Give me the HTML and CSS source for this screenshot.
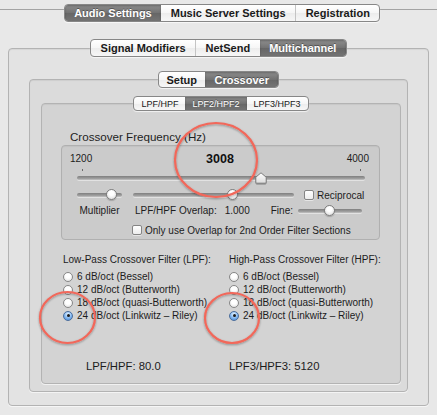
FILE: index.html
```html
<!DOCTYPE html>
<html>
<head>
<meta charset="utf-8">
<link rel="stylesheet" href="styles.css">
</head>
<body>
<div class="window">
  <div class="topbar">
    <div class="seg big">
      <span class="on">Audio Settings</span><span>Music Server Settings</span><span class="div">Registration</span>
    </div>
  </div>

  <div class="tabview tv1">
    <div class="seg big">
      <span>Signal Modifiers</span><span class="div">NetSend</span><span class="on">Multichannel</span>
    </div>
    <div class="pane p1">
      <div class="tabview tv2">
        <div class="seg big s3">
          <span class="s-setup">Setup</span><span class="on">Crossover</span>
        </div>
        <div class="pane p2">
          <div class="tabview tv3">
            <div class="seg small">
              <span>LPF/HPF</span><span class="on">LPF2/HPF2</span><span>LPF3/HPF3</span>
            </div>
            <div class="pane p3">
              <div class="group-label">Crossover Frequency (Hz)</div>
              <div class="groupbox">
                <div class="values">
                  <span>1200</span>
                  <span class="current">3008</span>
                  <span>4000</span>
                </div>
                <div class="ticks"><i></i><i></i></div>
                <div class="slider main">
                  <div class="track"></div>
                  <svg class="thumb-tri" style="left:178px" width="12" height="12" viewBox="0 0 12 12">
                    <defs>
                      <linearGradient id="tg" x1="0" y1="0" x2="0" y2="1">
                        <stop offset="0" stop-color="#ffffff"/>
                        <stop offset="1" stop-color="#dcdcdc"/>
                      </linearGradient>
                    </defs>
                    <path d="M6 0.8 L11.2 5.2 L11.2 10.2 Q11.2 11.2 10.2 11.2 L1.8 11.2 Q0.8 11.2 0.8 10.2 L0.8 5.2 Z" fill="url(#tg)" stroke="#7d7d7d" stroke-width="1"/>
                  </svg>
                </div>
                <div class="row2">
                  <div class="slider mult"><div class="track"></div><span class="knob" style="left:29px"></span></div>
                  <div class="slider overlap"><div class="track"></div><span class="knob" style="left:94px"></span></div>
                  <label class="check"><span class="box"></span>Reciprocal</label>
                </div>
                <div class="row3">
                  <span class="mult-label">Multiplier</span>
                  <span class="ov-label">LPF/HPF Overlap:</span>
                  <span class="ov-value">1.000</span>
                  <span class="fine-label">Fine:</span>
                  <div class="slider fine"><div class="track"></div><span class="knob" style="left:26px"></span></div>
                </div>
                <label class="check row4"><span class="box"></span>Only use Overlap for 2nd Order Filter Sections</label>
              </div>

              <div class="filters">
                <div class="fcol">
                  <div class="flabel">Low-Pass Crossover Filter (LPF):</div>
                  <div class="radio"><span class="dot"></span>6 dB/oct (Bessel)</div>
                  <div class="radio"><span class="dot"></span>12 dB/oct (Butterworth)</div>
                  <div class="radio"><span class="dot"></span>18 dB/oct (quasi-Butterworth)</div>
                  <div class="radio"><span class="dot sel"></span>24 dB/oct (Linkwitz – Riley)</div>
                </div>
                <div class="fcol">
                  <div class="flabel">High-Pass Crossover Filter (HPF):</div>
                  <div class="radio"><span class="dot"></span>6 dB/oct (Bessel)</div>
                  <div class="radio"><span class="dot"></span>12 dB/oct (Butterworth)</div>
                  <div class="radio"><span class="dot"></span>18 dB/oct (quasi-Butterworth)</div>
                  <div class="radio"><span class="dot sel"></span>24 dB/oct (Linkwitz – Riley)</div>
                </div>
              </div>

              <div class="readouts">
                <span class="r1">LPF/HPF: 80.0</span>
                <span>LPF3/HPF3: 5120</span>
              </div>
            </div>
          </div>
        </div>
      </div>
    </div>
  </div>

  <svg class="marks" width="437" height="415" viewBox="0 0 437 415">
    <defs>
      <filter id="sh" x="-20%" y="-20%" width="140%" height="140%">
        <feDropShadow dx="0" dy="1" stdDeviation="0.8" flood-color="#000" flood-opacity="0.35"/>
      </filter>
    </defs>
    <g fill="none" stroke="#f2675a" stroke-width="2.2" filter="url(#sh)">
      <ellipse cx="216" cy="160" rx="41" ry="37"/>
      <ellipse cx="67.5" cy="317.5" rx="27.5" ry="25.5"/>
      <ellipse cx="232" cy="318" rx="27" ry="25"/>
    </g>
  </svg>
</div>
</body>
</html>
```

FILE: styles.css
```css
* { box-sizing: border-box; }

html, body {
  margin: 0;
  padding: 0;
  background: #e8e8e8;
}

body {
  font-family: "Liberation Sans", Arial, sans-serif;
  color: #1c1c1c;
}

.window {
  position: relative;
  width: 437px;
  height: 415px;
  overflow: hidden;
  background: #e8e8e8;
}

/* ---------- segmented tabs ---------- */
.seg {
  position: relative;
  z-index: 1;
  display: inline-flex;
  border: 1px solid #878787;
  border-radius: 4px;
  overflow: hidden;
  box-shadow: 0 1px 1px rgba(255,255,255,0.7);
  background: linear-gradient(#ffffff, #f6f6f6 50%, #ececec 51%, #f7f7f7);
}

.seg span {
  display: flex;
  align-items: center;
  justify-content: center;
  white-space: nowrap;
  color: #1a1a1a;
}

.seg span.div {
  border-left: 1px solid #c4c4c4;
}

.seg span.on {
  color: #ffffff;
  background: linear-gradient(#8e8e8e, #727272 50%, #666666 51%, #747474);
  text-shadow: 0 -1px 0 rgba(0,0,0,0.35);
  box-shadow: inset 0 1px 2px rgba(0,0,0,0.25);
}

.seg.big {
  height: 18px;
  font-size: 11px;
  font-weight: bold;
}

.seg.big span {
  padding: 0 9.5px;
}

.seg.s3 {
  height: 17px;
}

.seg.s3 .s-setup {
  padding: 0 8px;
}

.seg.small {
  height: 15px;
  font-size: 9px;
}

.seg.small span {
  padding: 0 7px;
}

/* ---------- top bar ---------- */
.topbar {
  display: flex;
  justify-content: center;
  padding: 4px 0 0 7px;
  background: linear-gradient(#a3a3a3, #a3a3a3) 0 9px / 100% 1px no-repeat;
}

/* ---------- tab views ---------- */
.tabview {
  display: flex;
  flex-direction: column;
  align-items: center;
}

.pane {
  align-self: stretch;
  border: 1px solid #b3b3b3;
  border-radius: 4px;
  box-shadow: inset 0 1px 1px rgba(0,0,0,0.06), 0 1px 0 rgba(255,255,255,0.6);
}

.tv1 {
  margin: 17px 8px 0 8px;
}

.p1 {
  margin-top: -9px;
  padding: 22px 20px 13px 20px;
  background: #e3e3e3;
}

.p2 {
  margin-top: -9px;
  padding: 16px 6px 7px 11px;
  background: #dbdbdb;
}

.p3 {
  margin-top: -8px;
  padding: 26px 0 10px 0;
  background: #d3d3d3;
}

/* ---------- crossover group ---------- */
.group-label {
  margin-left: 28px;
  font-size: 11.6px;
  line-height: 14px;
  height: 15px;
  color: #1e1e1e;
}

.groupbox {
  margin: 0 20px 0 19px;
  height: 95px;
  border: 1px solid #b0b0b0;
  border-radius: 4px;
  background: #cbcbcb;
  box-shadow: inset 0 1px 1px rgba(0,0,0,0.05);
  padding-top: 7px;
  font-size: 10px;
}

.values {
  display: flex;
  align-items: center;
  height: 12px;
  padding: 0 10px 0 8px;
  line-height: 12px;
}

.values .current {
  flex: 1;
  text-align: center;
  font-weight: bold;
  font-size: 12.5px;
  padding-left: 1px;
  color: #111;
}

.ticks {
  display: flex;
  justify-content: space-between;
  margin: 4px 18px 0 20px;
  height: 2px;
}

.ticks i {
  display: block;
  width: 1px;
  height: 2px;
  background: #6a6a6a;
}

.slider {
  position: relative;
  height: 12px;
}

.track {
  position: absolute;
  left: 0;
  right: 0;
  top: 4px;
  height: 4px;
  border-radius: 2px;
  background: linear-gradient(#7f7f7f, #9c9c9c 60%, #c4c4c4);
  box-shadow: 0 1px 0 rgba(255,255,255,0.45);
}

.slider.main {
  margin: 1px 14px 0 15px;
}

.thumb-tri {
  position: absolute;
  top: 0;
  filter: drop-shadow(0 1px 0.6px rgba(0,0,0,0.25));
}

.knob {
  position: absolute;
  top: 0;
  width: 11px;
  height: 11px;
  border-radius: 50%;
  border: 1px solid #7d7d7d;
  background: radial-gradient(circle at 50% 35%, #ffffff 30%, #e2e2e2 80%);
  box-shadow: 0 1px 1px rgba(0,0,0,0.2);
}

.row2 {
  display: flex;
  align-items: center;
  margin-top: 5px;
  height: 12px;
  padding-left: 15px;
}

.slider.mult {
  width: 45px;
}

.slider.overlap {
  width: 161px;
  margin-left: 11px;
}

.check {
  display: flex;
  align-items: center;
  gap: 3px;
  white-space: nowrap;
}

.check .box {
  display: block;
  width: 10px;
  height: 10px;
  border: 1px solid #858585;
  border-radius: 2px;
  background: linear-gradient(#ffffff, #ededed);
  box-shadow: 0 1px 0 rgba(255,255,255,0.5);
}

.row2 .check {
  margin-left: 10px;
}

.row3 {
  display: flex;
  align-items: center;
  margin-top: 3px;
  height: 12px;
  padding-left: 15px;
  white-space: nowrap;
}

.mult-label {
  width: 45px;
  text-align: center;
}

.ov-label {
  margin-left: 13px;
}

.ov-value {
  margin-left: 8px;
}

.fine-label {
  margin-left: 21px;
}

.slider.fine {
  width: 64px;
  margin-left: 5px;
  top: 1px;
}

.row4 {
  margin: 8px 0 0 70px;
  height: 12px;
}

/* ---------- filters ---------- */
.filters {
  display: grid;
  grid-template-columns: 166px auto;
  padding-left: 21px;
  margin-top: 14px;
  font-size: 10px;
}

.flabel {
  height: 12px;
  line-height: 12px;
  margin-bottom: 4px;
  white-space: nowrap;
}

.radio {
  display: flex;
  align-items: center;
  gap: 4px;
  height: 13px;
  white-space: nowrap;
}

.dot {
  position: relative;
  display: block;
  width: 10px;
  height: 10px;
  border-radius: 50%;
  border: 1px solid #878787;
  background: radial-gradient(circle at 50% 35%, #ffffff 35%, #e3e3e3 85%);
}

.dot.sel {
  border-color: #4a6d9c;
  background: radial-gradient(circle at 50% 30%, #d7ebff 10%, #7fb4ee 55%, #4b8ad6 95%);
}

.dot.sel::after {
  content: "";
  position: absolute;
  left: 2.5px;
  top: 2.5px;
  width: 3px;
  height: 3px;
  border-radius: 50%;
  background: #1a1a1a;
}

/* ---------- readouts ---------- */
.readouts {
  display: grid;
  grid-template-columns: 166px auto;
  padding-left: 21px;
  margin-top: 37px;
  font-size: 11.3px;
  line-height: 14px;
  white-space: nowrap;
}

.readouts .r1 {
  margin-left: 23px;
}

/* ---------- annotation circles ---------- */
.marks {
  position: absolute;
  left: 0;
  top: 0;
  pointer-events: none;
}
```
